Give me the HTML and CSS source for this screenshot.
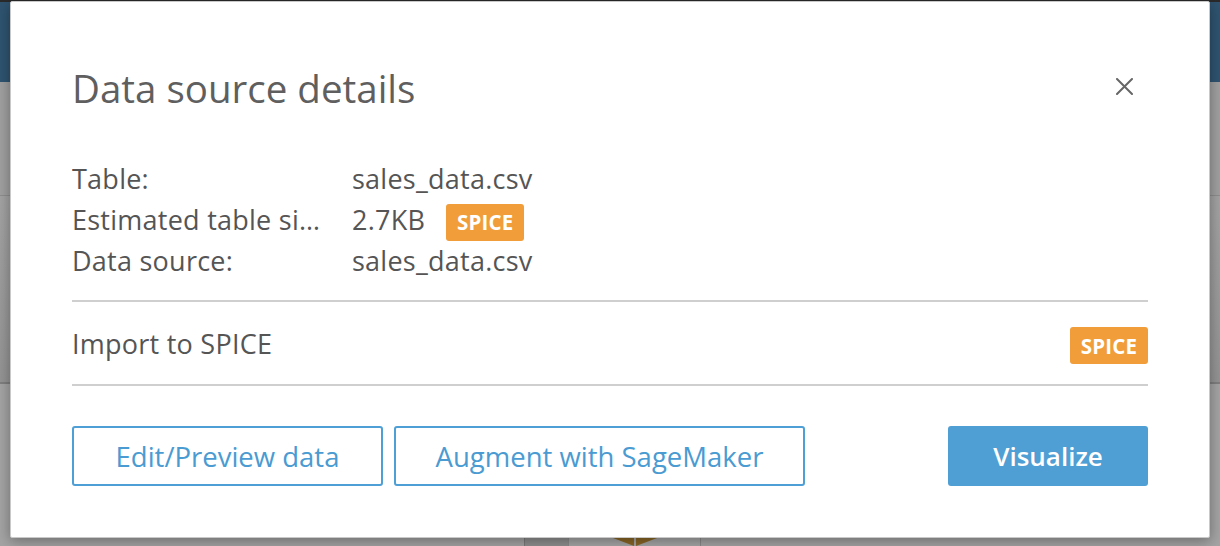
FILE: index.html
```html
<!DOCTYPE html>
<html lang="en">
<head>
<meta charset="utf-8">
<title>Data source details</title>
<link rel="stylesheet" href="styles.css">
</head>
<body>
<div class="page">
  <div class="topline"></div>
  <header class="appbar"></header>
  <div class="band band-a"></div>
  <div class="band band-b"></div>
  <div class="band band-c">
    <div class="bottom-items">
      <div class="tile tile-dark"></div>
      <div class="tile tile-light">
        <svg class="caret" width="44" height="8" viewBox="0 0 44 8"><path d="M0 0 L21 0 L21 8 Z" fill="#8a6626"/><path d="M23 0 L44 0 L23 8 Z" fill="#8a6626"/></svg>
      </div>
    </div>
  </div>
</div>

<div class="modal" role="dialog" aria-labelledby="modal-title">
  <div class="modal-head">
    <h1 id="modal-title" class="modal-title">Data source details</h1>
    <button class="close-btn" aria-label="Close">
      <svg width="17" height="17" viewBox="0 0 17 17"><path d="M1 1 L16 16 M16 1 L1 16" stroke="#666" stroke-width="2" stroke-linecap="round"/></svg>
    </button>
  </div>

  <div class="details">
    <div class="detail-row">
      <span class="detail-label">Table:</span>
      <span class="detail-value">sales_data.csv</span>
    </div>
    <div class="detail-row">
      <span class="detail-label" title="Estimated table size:">Estimated table size:</span>
      <span class="detail-value">2.7KB <span class="badge">SPICE</span></span>
    </div>
    <div class="detail-row">
      <span class="detail-label">Data source:</span>
      <span class="detail-value">sales_data.csv</span>
    </div>
  </div>

  <div class="import-row">
    <span class="import-label">Import to SPICE</span>
    <span class="badge">SPICE</span>
  </div>

  <div class="actions">
    <button class="btn btn-outline btn-edit">Edit/Preview data</button>
    <button class="btn btn-outline btn-augment">Augment with SageMaker</button>
    <span class="spacer"></span>
    <button class="btn btn-primary">Visualize</button>
  </div>
</div>
</body>
</html>
```

FILE: styles.css
```css
* { box-sizing: border-box; }

html, body {
  margin: 0;
  padding: 0;
  width: 1220px;
  height: 546px;
  overflow: hidden;
}

body {
  font-family: "Open Sans", "Noto Sans", "Liberation Sans", sans-serif;
  background: #9c9c9c;
  position: relative;
}

/* ---- dimmed page behind the dialog ---- */
.page {
  display: flex;
  flex-direction: column;
  height: 546px;
}
.topline { height: 2px; background: #2a2a2a; }
.appbar { height: 80px; background: #2f5470; }
.band-a { height: 114px; background: #a0a0a0; border-bottom: 1px solid #8e8e8e; }
.band-b { height: 188px; background: linear-gradient(#a3a3a3, #949494); border-bottom: 2px solid #7f7f7f; }
.band-c { flex: 1; background: #a4a4a4; display: flex; flex-direction: column; justify-content: flex-end; }

.bottom-items {
  display: flex;
  height: 8px;
  margin-left: 524px;
}
.tile { height: 8px; }
.tile-dark { width: 44px; background: #8f8f8f; border-left: 1px solid #7a7a7a; }
.tile-light { width: 133px; background: #a6a6a6; border-left: 1px solid #8a8a8a; border-right: 1px solid #8a8a8a; display: flex; justify-content: flex-start; padding-left: 44px; }
.caret { display: block; }

/* ---- dialog ---- */
.modal {
  position: absolute;
  left: 10px;
  top: 1px;
  width: 1200px;
  height: 537px;
  background: #fff;
  border: 1px solid #c9c9c9;
  border-radius: 2px;
  box-shadow: 0 3px 14px rgba(0, 0, 0, 0.35);
  padding: 62px 61px 0 61px;
  display: flex;
  flex-direction: column;
  color: #555;
}

.modal-head {
  display: flex;
  align-items: flex-start;
  justify-content: space-between;
}
.modal-title {
  margin: 0;
  font-size: 38.5px;
  line-height: 48px;
  font-weight: 400;
  color: #5f5f5f;
}
.close-btn {
  background: none;
  border: 0;
  padding: 0;
  margin: 14px 15px 0 0;
  width: 17px;
  height: 17px;
  cursor: pointer;
  display: block;
}
.close-btn svg { display: block; }

.details {
  margin-top: 46px;
  display: flex;
  flex-direction: column;
}
.detail-row {
  display: flex;
  align-items: center;
  height: 41px;
  font-size: 27px;
  letter-spacing: 0.25px;
  color: #555;
}
.detail-label {
  width: 256px;
  margin-right: 24px;
  white-space: nowrap;
  overflow: hidden;
  text-overflow: ellipsis;
}
.detail-value {
  display: flex;
  align-items: center;
  gap: 21px;
}

.badge {
  display: inline-flex;
  align-items: center;
  justify-content: center;
  width: 78px;
  height: 37px;
  background: #f09d3a;
  color: #fff;
  font-weight: 700;
  font-size: 20.5px;
  letter-spacing: 0.2px;
  border-radius: 3px;
}
.detail-value .badge { margin-top: 5px; }

.import-row {
  margin-top: 19px;
  height: 86px;
  border-top: 2px solid #cfcfcf;
  border-bottom: 2px solid #cfcfcf;
  display: flex;
  align-items: center;
  justify-content: space-between;
  font-size: 27px;
  letter-spacing: 0.25px;
  color: #555;
}
.import-row .badge { margin-top: 5px; }

.actions {
  margin-top: 40px;
  display: flex;
  align-items: center;
  gap: 11px;
}
.spacer { flex: 1; }
.btn {
  height: 60px;
  font-family: inherit;
  font-size: 27.5px;
  border-radius: 3px;
  padding: 0;
  cursor: pointer;
}
.btn-outline {
  background: #fff;
  border: 2px solid #4e9fd6;
  color: #4a9bd2;
}
.btn-edit { width: 311px; }
.btn-augment { width: 411px; }
.btn-primary {
  width: 200px;
  background: #4f9ed4;
  border: 0;
  color: #fff;
  font-size: 26px;
  font-weight: 600;
}
```
